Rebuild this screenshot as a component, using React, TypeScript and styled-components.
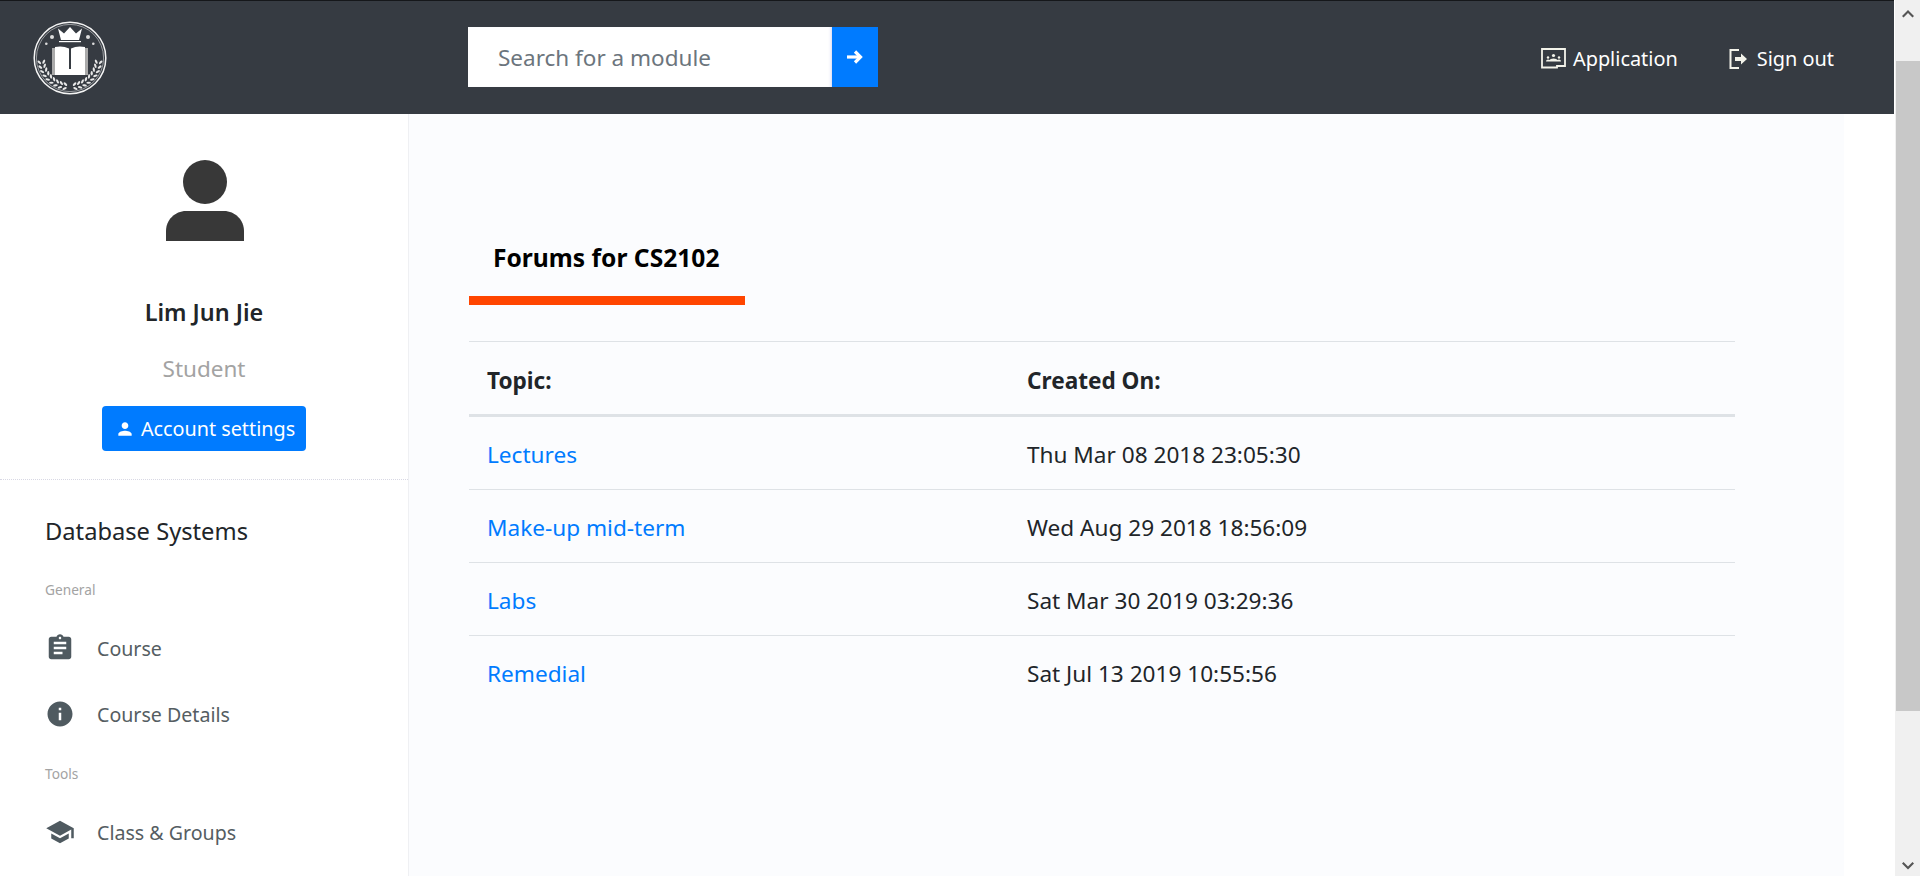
import React from 'react';
import styled, { createGlobalStyle } from 'styled-components';
import { MdAssignment, MdInfo, MdPerson, MdSchool } from 'react-icons/md';

const GlobalStyle = createGlobalStyle`
	html, body {
		margin: 0;
		padding: 0;
		height: 100%;
		overflow: hidden;
		background: #fff;
		font-family: 'Noto Sans', 'Open Sans', sans-serif;
		color: #212529;
	}
	* {
		box-sizing: border-box;
	}
`;

const Shell = styled.div`
	display: flex;
	width: 1920px;
	height: 876px;
	overflow: hidden;
`;

const Page = styled.div`
	width: 1895px;
	display: flex;
	flex-direction: column;
	border-right: 1px solid #fff;
`;

const Header = styled.header`
	flex: 0 0 114px;
	display: flex;
	align-items: center;
	background: #363b42;
	border-top: 1px solid #15171a;
	padding: 0 60px 0 33px;
`;

const LogoBox = styled.div`
	width: 74px;
	height: 74px;
`;

const SearchForm = styled.form`
	display: flex;
	margin: -1px 0 0 361px;
	height: 60px;
`;

const SearchInput = styled.input`
	width: 364px;
	border: 0;
	outline: 0;
	padding: 0 30px;
	font: 400 22.5px 'Noto Sans', sans-serif;
	background: #fff;
	box-shadow: inset -3px 0 3px -2px rgba(90, 90, 200, 0.25);
	&::placeholder {
		color: #6c757d;
		opacity: 1;
	}
`;

const SearchButton = styled.button`
	width: 46px;
	border: 0;
	padding: 0;
	background: #007bff;
	color: #fff;
	display: flex;
	align-items: center;
	justify-content: center;
`;

const HeaderLinks = styled.nav`
	margin-left: auto;
	display: flex;
	align-items: center;
	gap: 51px;
	padding-top: 2px;
`;

const HeaderLink = styled.a<{ $gap: number }>`
	display: flex;
	align-items: center;
	gap: ${(p) => p.$gap}px;
	color: #fff;
	font-size: 19.9px;
	text-decoration: none;
`;

const Body = styled.div`
	flex: 1;
	display: flex;
	min-height: 0;
`;

const Sidebar = styled.aside`
	width: 409px;
	background: #fff;
	border-right: 1px solid #eff0f3;
	flex-shrink: 0;
`;

const Profile = styled.div`
	height: 366px;
	display: flex;
	flex-direction: column;
	align-items: center;
	border-bottom: 1px dotted #d8d8e4;
	padding-top: 46px;
`;

const AvatarBox = styled.div`
	height: 82px;
	margin-left: 2px;
`;

const Name = styled.div`
	margin-top: 54px;
	font-size: 23.4px;
	line-height: 32px;
	font-weight: 600;
	color: #212529;
`;

const Role = styled.div`
	margin-top: 25px;
	font-size: 22.5px;
	line-height: 32px;
	color: #a3a3a3;
`;

const SettingsButton = styled.button`
	margin-top: 21px;
	width: 204px;
	height: 45px;
	margin-right: 1px;
	padding: 0 0 0 3px;
	border: 0;
	border-radius: 4px;
	background: #007bff;
	color: #fff;
	font: 400 19.8px 'Noto Sans', sans-serif;
	display: flex;
	align-items: center;
	justify-content: center;
	gap: 6px;
`;

const Course = styled.div`
	padding: 33px 0 0 45px;
`;

const CourseTitle = styled.h2`
	margin: 0;
	font-size: 23.7px;
	line-height: 36px;
	font-weight: 400;
	color: #212529;
`;

const GroupLabel = styled.div<{ $gap: number }>`
	margin-top: ${(p) => p.$gap}px;
	margin-bottom: 15px;
	font-size: 13.7px;
	line-height: 20px;
	color: #a3a3a3;
`;

const MenuItem = styled.a`
	display: flex;
	align-items: center;
	height: 66px;
	color: #555d62;
	font-size: 19.6px;
	text-decoration: none;
	svg {
		width: 30px;
		height: 30px;
		margin-right: 22px;
		color: #4f5a60;
		flex-shrink: 0;
	}
`;

const Main = styled.main`
	width: 1435px;
	background: #fbfcfe;
	padding: 96px 108px 0 60px;
`;

const TabTitle = styled.div`
	width: 276px;
	height: 95px;
	padding: 30px 0 0 24px;
	border-bottom: 9px solid #ff4500;
	font-size: 24.6px;
	line-height: 36px;
	font-weight: 700;
	color: #000;
`;

const ForumTable = styled.table`
	margin-top: 36px;
	width: 1266px;
	border-collapse: collapse;
	table-layout: fixed;
	font-size: 22.6px;
`;

const HeadCell = styled.th<{ $width?: number }>`
	width: ${(p) => (p.$width ? `${p.$width}px` : 'auto')};
	text-align: left;
	font-weight: 700;
	height: 74px;
	padding: 4px 18px 0;
	border-top: 1px solid #dee2e6;
	border-bottom: 3px solid #dee2e6;
	color: #212529;
`;

const Row = styled.tr`
	&:first-child td {
		height: 74px;
	}
`;

const Cell = styled.td`
	height: 73px;
	padding: 2px 18px 0;
	border-top: 1px solid #dee2e6;
	color: #212529;
`;

const TopicLink = styled.a`
	color: #007bff;
	text-decoration: none;
`;

const Scrollbar = styled.div`
	width: 25px;
	background: #f0f0f0;
	display: flex;
	flex-direction: column;
	align-items: center;
`;

const ScrollArrow = styled.div`
	flex: 0 0 61px;
	width: 100%;
	display: flex;
	justify-content: center;
	padding-top: 10px;
`;

const ScrollThumb = styled.div`
	flex: 0 0 650px;
	width: 24px;
	margin-left: 1px;
	background: #c8c8c8;
`;

const ScrollArrowBottom = styled(ScrollArrow)`
	flex: 1;
	align-items: flex-end;
	padding: 0 0 6px;
`;

// laurel leaves sit on an arc round the centre of the badge
const laurel = (side: 1 | -1) =>
	Array.from({ length: 9 }).flatMap((_, i) => {
		const deg = 172 - i * 9;
		const angle = (deg * Math.PI) / 180;
		return [26.5, 31].map((r) => {
			const x = 37 + side * Math.cos(angle) * r;
			const y = 37 + Math.sin(angle) * r;
			const tilt = side * (deg - 90 + (r > 28 ? -35 : 35));
			return { x, y, tilt, key: `${side}-${i}-${r}` };
		});
	});

const Logo = () => (
	<svg viewBox="0 0 74 74" width="74" height="74">
		<circle cx="37" cy="37" r="35.8" fill="none" stroke="#f4f4f4" strokeWidth="1.5" />
		<circle cx="37" cy="37" r="33.6" fill="none" stroke="#fff" strokeWidth="0.7" opacity="0.7" />
		<path d="M25 7.500l6 5 6-6.500 6 6.500 6-5-3 11.500H28z" fill="#fff" />
		<rect x="26" y="20" width="22" height="1.200" fill="#fff" />
		<circle cx="19" cy="16" r="2" fill="#ddd" />
		<circle cx="55" cy="16" r="2" fill="#ddd" />
		<circle cx="13.300" cy="22.700" r="1.300" fill="#ddd" />
		<circle cx="60.300" cy="22.700" r="1.300" fill="#ddd" />
		<path d="M19 27h3v27h-3zM52 27h3v27h-3z" fill="#aaa" />
		<path d="M22 26q8-1.500 14 1.500V54H22z" fill="#fff" />
		<path d="M52 26q-8-1.500-14 1.500V54h14z" fill="#fff" />
		<path d="M36 48h2v6h-2z" fill="#fff" />
		<g fill="#e8e8e8">
			{[...laurel(1), ...laurel(-1)].map((l) => (
				<ellipse key={l.key} cx={l.x} cy={l.y} rx="2.300" ry="1.100" transform={`rotate(${l.tilt} ${l.x} ${l.y})`} />
			))}
		</g>
	</svg>
);

const ApplicationIcon = () => (
	<svg viewBox="0 0 25 21" width="25" height="21" fill="none">
		<path d="M1 1h23v17H16v1.500H1z" stroke="#f3f3ea" strokeWidth="1.800" />
		<path d="M5 13.500q0-2 2-2 1.200 0 1.600.6.500-1.600 3.900-1.600t3.900 1.600q.4-.6 1.600-.6 2 0 2 2z" fill="#f3f3ea" />
		<circle cx="7" cy="9.500" r="1.200" fill="#f3f3ea" />
		<circle cx="12.500" cy="7.500" r="1.600" fill="#f3f3ea" />
		<circle cx="18" cy="9.500" r="1.200" fill="#f3f3ea" />
	</svg>
);

const SignOutIcon = () => (
	<svg viewBox="0 0 20 20" width="20" height="20" fill="none">
		<path d="M10 1H1.500v18H10" stroke="#f3f3ea" strokeWidth="2" />
		<path d="M6 8h6V4.500l6 5.500-6 5.500V12H6z" fill="#f3f3ea" />
	</svg>
);

const ArrowIcon = () => (
	<svg viewBox="0 0 16 14" width="16" height="14" fill="none" stroke="#fff" strokeWidth="3.200">
		<path d="M0 7h13" />
		<path d="M8 1.500 13.500 7 8 12.500" />
	</svg>
);

const Avatar = () => (
	<svg viewBox="0 0 78 82" width="78" height="82">
		<circle cx="39" cy="22" r="22" fill="#383838" />
		<path d="M0 81V71C0 60 9 51 20 51H58C69 51 78 60 78 71V81z" fill="#383838" />
	</svg>
);

const Chevron = ({ down }: { down?: boolean }) => (
	<svg viewBox="0 0 12 8" width="12" height="8">
		<path d={down ? 'M0 1.500 1.500 0 6 4.500 10.500 0 12 1.500 6 7.500z' : 'M0 6 6 0l6 6-1.500 1.500L6 3 1.500 7.500z'} fill="#555" />
	</svg>
);

const forums = [
	{ topic: 'Lectures', created: 'Thu Mar 08 2018 23:05:30' },
	{ topic: 'Make-up mid-term', created: 'Wed Aug 29 2018 18:56:09' },
	{ topic: 'Labs', created: 'Sat Mar 30 2019 03:29:36' },
	{ topic: 'Remedial', created: 'Sat Jul 13 2019 10:55:56' },
];

export default function App() {
	return (
		<Shell>
			<GlobalStyle />
			<Page>
				<Header>
					<LogoBox>
						<Logo />
					</LogoBox>
					<SearchForm>
						<SearchInput placeholder="Search for a module" />
						<SearchButton type="button">
							<ArrowIcon />
						</SearchButton>
					</SearchForm>
					<HeaderLinks>
						<HeaderLink $gap={7}>
							<ApplicationIcon />
							Application
						</HeaderLink>
						<HeaderLink $gap={8}>
							<SignOutIcon />
							Sign out
						</HeaderLink>
					</HeaderLinks>
				</Header>
				<Body>
					<Sidebar>
						<Profile>
							<AvatarBox>
								<Avatar />
							</AvatarBox>
							<Name>Lim Jun Jie</Name>
							<Role>Student</Role>
							<SettingsButton type="button">
								<MdPerson size={20} />
								Account settings
							</SettingsButton>
						</Profile>
						<Course>
							<CourseTitle>Database Systems</CourseTitle>
							<GroupLabel $gap={31}>General</GroupLabel>
							<MenuItem>
								<MdAssignment />
								Course
							</MenuItem>
							<MenuItem>
								<MdInfo />
								Course Details
							</MenuItem>
							<GroupLabel $gap={17}>Tools</GroupLabel>
							<MenuItem>
								<MdSchool />
								Class &amp; Groups
							</MenuItem>
						</Course>
					</Sidebar>
					<Main>
						<TabTitle>Forums for CS2102</TabTitle>
						<ForumTable>
							<thead>
								<tr>
									<HeadCell $width={540}>Topic:</HeadCell>
									<HeadCell>Created On:</HeadCell>
								</tr>
							</thead>
							<tbody>
								{forums.map((f) => (
									<Row key={f.topic}>
										<Cell>
											<TopicLink>{f.topic}</TopicLink>
										</Cell>
										<Cell>{f.created}</Cell>
									</Row>
								))}
							</tbody>
						</ForumTable>
					</Main>
				</Body>
			</Page>
			<Scrollbar>
				<ScrollArrow>
					<Chevron />
				</ScrollArrow>
				<ScrollThumb />
				<ScrollArrowBottom>
					<Chevron down />
				</ScrollArrowBottom>
			</Scrollbar>
		</Shell>
	);
}
